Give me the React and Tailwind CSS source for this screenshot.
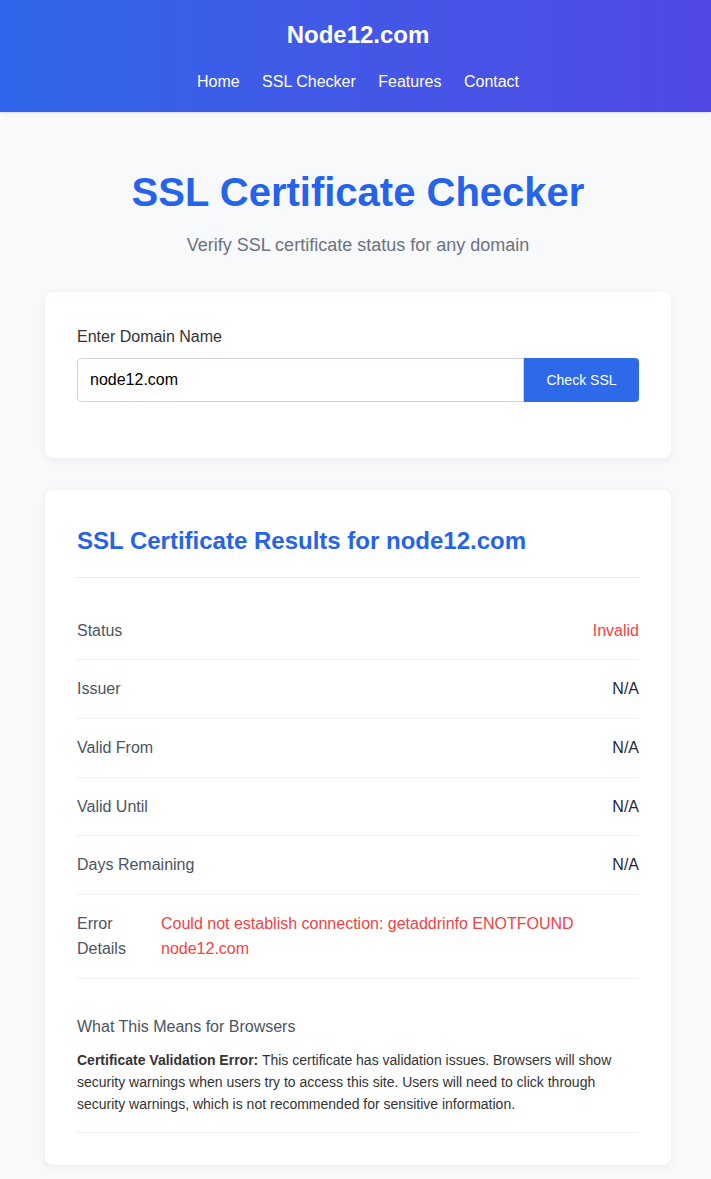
export default function App() {
  const navItems = ["Home", "SSL Checker", "Features", "Contact"];

  const rows = [
    { label: "Status", value: "Invalid", danger: true },
    { label: "Issuer", value: "N/A" },
    { label: "Valid From", value: "N/A" },
    { label: "Valid Until", value: "N/A" },
    { label: "Days Remaining", value: "N/A" },
  ];

  return (
    <div className="min-h-screen bg-[#f8f9fa] font-['Liberation_Sans',Arial,sans-serif] leading-[1.6] text-[#333]">
      {/* Header */}
      <header className="bg-gradient-to-r from-[#2e66ea] to-[#5048e4] pl-[5px] pt-4 pb-[17px] text-white shadow-sm">
        <h1 className="text-center text-2xl leading-[1.6] font-bold">Node12.com</h1>
        <nav className="mt-[15px] flex justify-center gap-[22.5px] text-base leading-[1.6]">
          {navItems.map((item) => (
            <a key={item} href="#" className="text-white">
              {item}
            </a>
          ))}
        </nav>
      </header>

      <main className="pl-[45px] pr-[40px] pb-4">
        {/* Hero */}
        <div className="pt-12 text-center">
          <h2 className="text-[40px] leading-[1.6] font-bold text-[#2563eb]">SSL Certificate Checker</h2>
          <p className="mt-[7px] text-lg leading-[1.6] text-[#6b7280]">Verify SSL certificate status for any domain</p>
        </div>

        {/* Search card */}
        <div className="mt-8 rounded-lg bg-white p-8 shadow-[0_2px_8px_rgba(0,0,0,0.06)]">
          <label className="block text-base leading-[1.6] text-[#333]">Enter Domain Name</label>
          <div className="mt-[9px] mb-6 flex">
            <input
              defaultValue="node12.com"
              className="h-11 min-w-0 flex-1 rounded-l-[4px] border border-[#d1d5db] px-3 text-base text-black outline-none"
            />
            <button className="h-11 w-[115px] rounded-r-[4px] bg-[#2d6aea] text-sm text-white">Check SSL</button>
          </div>
        </div>

        {/* Results card */}
        <div className="mt-8 rounded-lg bg-white p-8 shadow-[0_2px_8px_rgba(0,0,0,0.06)]">
          <h3 className="border-b border-[#e5e7eb] pb-4 text-2xl leading-[1.6] font-bold text-[#2563eb]">
            SSL Certificate Results for node12.com
          </h3>

          <div className="mt-6">
            {rows.map((row) => (
              <div
                key={row.label}
                className="flex justify-between border-b border-[#f0f1f3] py-4 text-base leading-[1.6]"
              >
                <span className="text-[#4b5563]">{row.label}</span>
                <span className={row.danger ? "text-[#ef4444]" : "text-[#1f2937]"}>{row.value}</span>
              </div>
            ))}
            <div className="flex border-b border-[#f0f1f3] py-4 text-base leading-[1.6]">
              <span className="w-[84px] shrink-0 text-[#4b5563]">Error Details</span>
              <span className="flex-1 text-[#ef4444]">
                Could not establish connection: getaddrinfo ENOTFOUND node12.com
              </span>
            </div>
          </div>

          <div className="mt-[35px] border-b border-[#f0f1f3] pb-4">
            <h4 className="text-base leading-[1.6] text-[#4b5563]">What This Means for Browsers</h4>
            <p className="mt-[9px] text-sm leading-[1.6] text-[#333]">
              <strong className="font-bold">Certificate Validation Error:</strong> This certificate has validation
              issues. Browsers will show security warnings when users try to access this site. Users will need to
              click through security warnings, which is not recommended for sensitive information.
            </p>
          </div>
        </div>
      </main>
    </div>
  );
}
